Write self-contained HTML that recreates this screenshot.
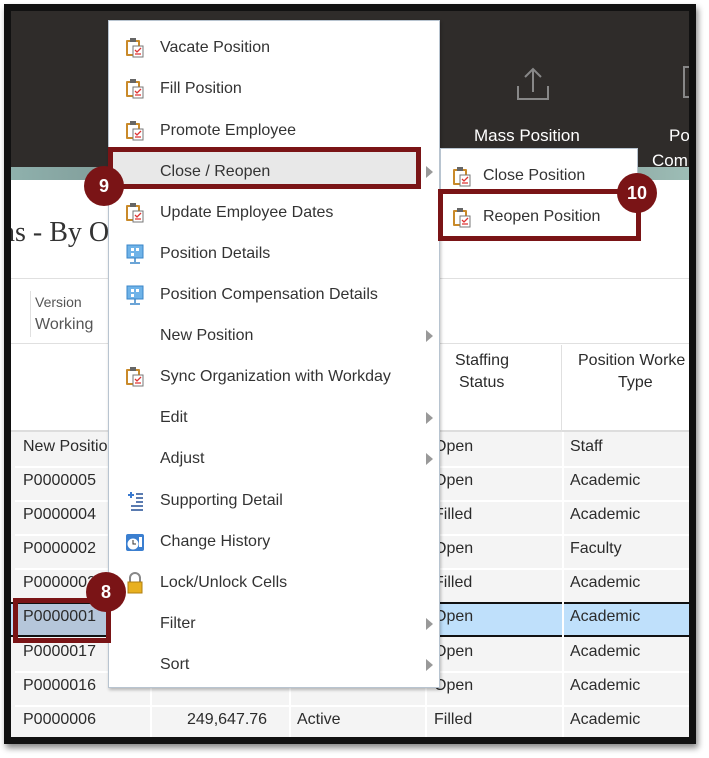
<!DOCTYPE html>
<html><head><style>
*{margin:0;padding:0;box-sizing:border-box}
body{width:709px;height:758px;background:#fff;position:relative;overflow:hidden;font-family:"Liberation Sans",Arial,sans-serif;color:#333}
.a{position:absolute}
.t{position:absolute;font-size:16px;color:#2b2b2b;white-space:nowrap}
.mi{position:absolute;left:160px;font-size:16px;color:#333;white-space:nowrap;margin-top:2px}
.ic{position:absolute;left:124px;width:22px;height:22px;margin-top:2px}
.arr{position:absolute;left:426px;width:0;height:0;border-top:6px solid transparent;border-bottom:6px solid transparent;border-left:7px solid #999;margin-top:2px}
.hl{position:absolute;background:#e0e0e0}
.vl{position:absolute;background:#e0e0e0;width:1px}
.box{position:absolute;border:5px solid #7a1416}
.c{position:absolute;width:40px;height:40px;border-radius:50%;background:#7a1416;color:#fff;font-weight:bold;font-size:18px;text-align:center;line-height:40px}
</style></head><body>
<div class="a" style="left:4px;top:4px;width:692px;height:740px;background:#111;box-shadow:2px 4px 6px #888"></div>
<div class="a" style="left:11px;top:11px;width:678px;height:726px;background:#fff;overflow:hidden">
 <div class="a" style="left:0;top:0;width:678px;height:169px;background:#2f2c2a"></div>
 <div class="a" style="left:0;top:156px;width:678px;height:13px;background:linear-gradient(90deg,#8fb1ad,#5d6b69 50%,#9dbdb6)"></div>
 <svg class="a" style="left:505px;top:55px" width="34" height="36"><path d="M17 3V26M9 11L17 3L25 11M2 20V33H32V20" stroke="#888" stroke-width="2" fill="none"/></svg>
 <div class="a" style="left:672px;top:55px;width:8px;height:32px;border:2px solid #888;border-right:none"></div>
 <div class="t" style="left:463px;top:115px;color:#fff;font-size:17px">Mass Position</div>
 <div class="t" style="left:658px;top:115px;color:#fff;font-size:17px">Po</div>
 <div class="t" style="left:641px;top:140px;color:#fff;font-size:17px">Com</div>
 <div class="t" style="left:-10px;top:206px;font-family:'Liberation Serif',serif;font-size:28px;color:#333">ns - By O</div>
 <div class="hl" style="left:0;top:267px;width:678px;height:1px"></div>
 <div class="vl" style="left:19px;top:280px;height:46px"></div>
 <div class="t" style="left:24px;top:283px;font-size:14px;color:#555">Version</div>
 <div class="t" style="left:24px;top:305px;color:#555">Working</div>
 <div class="hl" style="left:0;top:332px;width:678px;height:1px"></div>
 <div class="a" style="left:0;top:334px;width:678px;height:87px;background:#fff;border-bottom:2px solid #ddd"></div>
 <div class="vl" style="left:414px;top:334px;height:87px"></div>
 <div class="vl" style="left:550px;top:334px;height:87px"></div>
 <div class="t" style="left:444px;top:341px;text-align:center">Staffing</div>
 <div class="t" style="left:448px;top:363px">Status</div>
 <div class="t" style="left:567px;top:341px">Position Worke</div>
 <div class="t" style="left:607px;top:363px">Type</div>
 <div class="a" style="left:0;top:421px;width:678px;height:305px;background:#f4f4f4"></div>
 <div class="a" style="left:0;top:591px;width:678px;height:35px;background:#bfe0fb;border-top:2px solid #111;border-bottom:2px solid #111"></div>
 <div class="a" style="left:4px;top:593px;width:134px;height:31px;background:#b5c6da"></div>
 <div class="hl" style="left:4px;top:455px;width:674px;height:2px;background:#fff"></div>
 <div class="hl" style="left:4px;top:489px;width:674px;height:2px;background:#fff"></div>
 <div class="hl" style="left:4px;top:523px;width:674px;height:2px;background:#fff"></div>
 <div class="hl" style="left:4px;top:557px;width:674px;height:2px;background:#fff"></div>
 <div class="hl" style="left:4px;top:660px;width:674px;height:2px;background:#fff"></div>
 <div class="hl" style="left:4px;top:694px;width:674px;height:2px;background:#fff"></div>
 <div class="vl" style="left:139px;top:421px;height:305px;background:#fff;width:2px"></div>
 <div class="vl" style="left:278px;top:421px;height:305px;background:#fff;width:2px"></div>
 <div class="vl" style="left:414px;top:421px;height:305px;background:#fff;width:2px"></div>
 <div class="vl" style="left:551px;top:421px;height:305px;background:#fff;width:2px"></div>
 <div class="t" style="left:12px;top:427px">New Positio</div>
 <div class="t" style="left:12px;top:461px">P0000005</div>
 <div class="t" style="left:12px;top:495px">P0000004</div>
 <div class="t" style="left:12px;top:529px">P0000002</div>
 <div class="t" style="left:12px;top:563px">P0000003</div>
 <div class="t" style="left:12px;top:597px">P0000001</div>
 <div class="t" style="left:12px;top:632px">P0000017</div>
 <div class="t" style="left:12px;top:666px">P0000016</div>
 <div class="t" style="left:12px;top:700px">P0000006</div>
 <div class="t" style="left:176px;top:700px">249,647.76</div>
 <div class="t" style="left:286px;top:700px">Active</div>
 <div class="t" style="left:423px;top:427px">Open</div><div class="t" style="left:559px;top:427px">Staff</div>
 <div class="t" style="left:423px;top:461px">Open</div><div class="t" style="left:559px;top:461px">Academic</div>
 <div class="t" style="left:423px;top:495px">Filled</div><div class="t" style="left:559px;top:495px">Academic</div>
 <div class="t" style="left:423px;top:529px">Open</div><div class="t" style="left:559px;top:529px">Faculty</div>
 <div class="t" style="left:423px;top:563px">Filled</div><div class="t" style="left:559px;top:563px">Academic</div>
 <div class="t" style="left:423px;top:597px">Open</div><div class="t" style="left:559px;top:597px">Academic</div>
 <div class="t" style="left:423px;top:632px">Open</div><div class="t" style="left:559px;top:632px">Academic</div>
 <div class="t" style="left:423px;top:666px">Open</div><div class="t" style="left:559px;top:666px">Academic</div>
 <div class="t" style="left:423px;top:700px">Filled</div><div class="t" style="left:559px;top:700px">Academic</div>
</div>
<div class="a" style="left:108px;top:20px;width:332px;height:668px;background:#fff;border:1px solid #b8c4d0;box-shadow:1px 2px 3px rgba(0,0,0,.25)"></div>
<div class="a" style="left:112px;top:151px;width:306px;height:35px;background:#e8e8e8"></div>
<div class="a" style="left:440px;top:148px;width:198px;height:90px;background:#fff;border:1px solid #b8c4d0"></div>
<svg width="0" height="0" style="position:absolute"><defs><g id="clip"><rect x="2" y="3" width="14" height="16" fill="#c98a2a" rx="1"/><rect x="4" y="5" width="10" height="12" fill="#fff"/><rect x="6" y="1" width="6" height="4" fill="#666"/><rect x="9" y="9" width="10" height="11" fill="#fff" stroke="#777"/><path d="M11 13l2 2 4-4M11 17h6" stroke="#d33" stroke-width="1.3" fill="none"/></g><g id="mon"><rect x="3" y="2" width="16" height="13" fill="#6fb3e8" stroke="#3a86c8"/><rect x="7" y="5" width="3" height="3" fill="#fff"/><rect x="12" y="5" width="3" height="3" fill="#fff"/><rect x="7" y="10" width="3" height="3" fill="#fff"/><path d="M11 15v4M6 20h10" stroke="#3a86c8" stroke-width="1.5"/></g></defs></svg>
<svg class="ic" style="top:35px"><use href="#clip"/></svg><div class="mi" style="top:37px">Vacate Position</div>
<svg class="ic" style="top:76px"><use href="#clip"/></svg><div class="mi" style="top:78px">Fill Position</div>
<svg class="ic" style="top:118px"><use href="#clip"/></svg><div class="mi" style="top:120px">Promote Employee</div>
<div class="mi" style="top:161px">Close / Reopen</div><div class="arr" style="top:164px"></div>
<svg class="ic" style="top:200px"><use href="#clip"/></svg><div class="mi" style="top:202px">Update Employee Dates</div>
<svg class="ic" style="top:241px"><use href="#mon"/></svg><div class="mi" style="top:243px">Position Details</div>
<svg class="ic" style="top:282px"><use href="#mon"/></svg><div class="mi" style="top:284px">Position Compensation Details</div>
<div class="mi" style="top:325px">New Position</div><div class="arr" style="top:328px"></div>
<svg class="ic" style="top:364px"><use href="#clip"/></svg><div class="mi" style="top:366px">Sync Organization with Workday</div>
<div class="mi" style="top:407px">Edit</div><div class="arr" style="top:410px"></div>
<div class="mi" style="top:448px">Adjust</div><div class="arr" style="top:451px"></div>
<svg class="ic" style="top:488px"><path d="M4 5h6M7 2v6" stroke="#3a7ad0" stroke-width="2"/><path d="M12 4h7M12 8h7M12 12h7M7 16h12M7 20h12" stroke="#5a7bb0" stroke-width="2"/></svg><div class="mi" style="top:490px">Supporting Detail</div>
<svg class="ic" style="top:529px"><rect x="2" y="3" width="18" height="17" rx="2" fill="#3b7fd0"/><circle cx="9" cy="13" r="6" fill="#fff" stroke="#3b7fd0"/><path d="M9 9v4h3" stroke="#333" fill="none"/><rect x="15" y="6" width="3" height="10" fill="#fff"/></svg><div class="mi" style="top:531px">Change History</div>
<svg class="ic" style="top:570px"><path d="M6 10V6a5 5 0 0 1 10 0v4" stroke="#888" stroke-width="2" fill="none"/><rect x="4" y="10" width="14" height="11" fill="#e8b020" stroke="#b07f10"/></svg><div class="mi" style="top:572px">Lock/Unlock Cells</div>
<div class="mi" style="top:613px">Filter</div><div class="arr" style="top:616px"></div>
<div class="mi" style="top:654px">Sort</div><div class="arr" style="top:657px"></div>
<svg class="ic" style="left:451px;top:164px"><use href="#clip"/></svg><div class="mi" style="left:483px;top:165px">Close Position</div>
<svg class="ic" style="left:451px;top:205px"><use href="#clip"/></svg><div class="mi" style="left:483px;top:206px">Reopen Position</div>
<div class="box" style="left:108px;top:147px;width:313px;height:42px"></div>
<div class="c" style="left:84px;top:166px">9</div>
<div class="box" style="left:438px;top:189px;width:203px;height:52px"></div>
<div class="c" style="left:617px;top:173px">10</div>
<div class="box" style="left:13px;top:598px;width:98px;height:45px"></div>
<div class="c" style="left:86px;top:572px">8</div>
</body></html>
